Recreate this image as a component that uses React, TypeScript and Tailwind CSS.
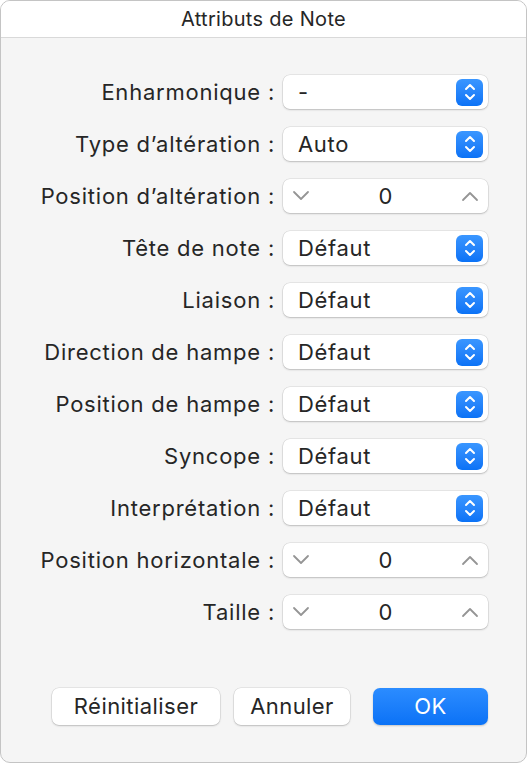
import React from "react"

type Row =
    | { label: string; kind: "select"; value: string }
    | { label: string; kind: "stepper"; value: string }

const rows: Row[] = [
    { label: "Enharmonique :", kind: "select", value: "-" },
    { label: "Type d’altération :", kind: "select", value: "Auto" },
    { label: "Position d’altération :", kind: "stepper", value: "0" },
    { label: "Tête de note :", kind: "select", value: "Défaut" },
    { label: "Liaison :", kind: "select", value: "Défaut" },
    { label: "Direction de hampe :", kind: "select", value: "Défaut" },
    { label: "Position de hampe :", kind: "select", value: "Défaut" },
    { label: "Syncope :", kind: "select", value: "Défaut" },
    { label: "Interprétation :", kind: "select", value: "Défaut" },
    { label: "Position horizontale :", kind: "stepper", value: "0" },
    { label: "Taille :", kind: "stepper", value: "0" },
]

const font = { fontFamily: "Inter, 'Noto Sans', sans-serif" }

function Chevron({ up }: { up?: boolean }) {
    return (
        <svg width="20" height="12" viewBox="0 0 20 12" fill="none">
            <path
                d={up ? "M3 10 L10 3 L17 10" : "M3 2 L10 9 L17 2"}
                stroke="#959595"
                strokeWidth="1.8"
                strokeLinecap="round"
                strokeLinejoin="round"
            />
        </svg>
    )
}

function SelectBox({ value }: { value: string }) {
    return (
        <div className="flex h-[34px] w-[205px] items-center justify-between rounded-[7px] bg-white pl-[15px] pr-[5px] shadow-[0_0_0_0.5px_rgba(0,0,0,0.12),0_1px_2px_rgba(0,0,0,0.18)]">
            <span className="text-[22px] tracking-[0.03em] text-[#262626]">{value}</span>
            <div className="flex h-[27px] w-[27px] items-center justify-center rounded-[6px] bg-gradient-to-b from-[#3a96ff] to-[#0a72f6]">
                <svg width="14" height="20" viewBox="0 0 14 20" fill="none">
                    <path d="M3 7 L7 3 L11 7" stroke="white" strokeWidth="2" strokeLinecap="round" strokeLinejoin="round" />
                    <path d="M3 13 L7 17 L11 13" stroke="white" strokeWidth="2" strokeLinecap="round" strokeLinejoin="round" />
                </svg>
            </div>
        </div>
    )
}

function Stepper({ value }: { value: string }) {
    return (
        <div className="flex h-[34px] w-[205px] items-center justify-between rounded-[7px] bg-white px-[8px] shadow-[0_0_0_0.5px_rgba(0,0,0,0.12),0_1px_2px_rgba(0,0,0,0.18)]">
            <Chevron />
            <span className="text-[22px] text-[#262626]">{value}</span>
            <Chevron up />
        </div>
    )
}

export default function App() {
    return (
        <div
            className="flex h-[763px] w-[527px] flex-col overflow-hidden rounded-[10px] border border-[#c4c4c4] bg-[#f5f5f5]"
            style={font}
        >
            {/* Title bar */}
            <div className="flex h-[37px] shrink-0 items-center justify-center border-b border-[#d9d9d9] bg-white">
                <span className="text-[20px] tracking-[0.015em] text-[#262626]">Attributs de Note</span>
            </div>

            {/* Form rows */}
            <div className="mt-[37px] flex flex-col gap-[18px]">
                {rows.map((r) => (
                    <div key={r.label} className="flex h-[34px] items-center">
                        <div className="w-[274px] shrink-0 whitespace-nowrap text-right text-[22px] tracking-[0.035em] text-[#262626]">
                            {r.label}
                        </div>
                        <div className="ml-[8px]">
                            {r.kind === "select" ? <SelectBox value={r.value} /> : <Stepper value={r.value} />}
                        </div>
                    </div>
                ))}
            </div>

            {/* Buttons */}
            <div className="mt-[59px] flex items-center pl-[51px] text-[22px] tracking-[0.02em]">
                <button className="h-[37px] w-[168px] rounded-[7px] bg-white text-[#262626] shadow-[0_0_0_0.5px_rgba(0,0,0,0.12),0_1px_2px_rgba(0,0,0,0.18)]">
                    Réinitialiser
                </button>
                <button className="ml-[14px] h-[37px] w-[116px] rounded-[7px] bg-white text-[#262626] shadow-[0_0_0_0.5px_rgba(0,0,0,0.12),0_1px_2px_rgba(0,0,0,0.18)]">
                    Annuler
                </button>
                <button className="ml-[23px] h-[37px] w-[115px] rounded-[7px] bg-gradient-to-b from-[#2b8cff] to-[#0a72f6] text-white shadow-[0_1px_2px_rgba(0,0,0,0.2)]">
                    OK
                </button>
            </div>
        </div>
    )
}
